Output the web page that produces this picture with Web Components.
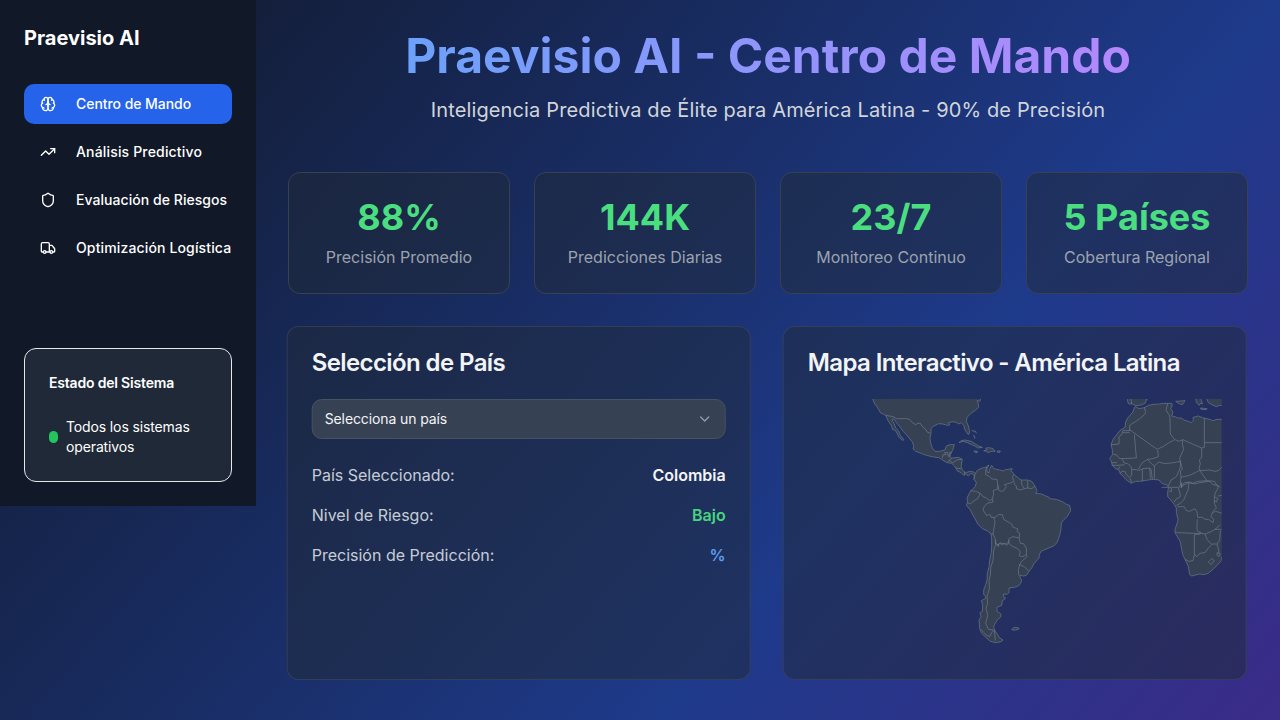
<!DOCTYPE html>
<html lang="es">
<head>
<meta charset="utf-8">
<title>Praevisio AI</title>
<style>
html,body{margin:0;height:100%;overflow:hidden}
body{font-family:Inter,sans-serif;font-size:16px;line-height:24px;color:#f3f4f6}
</style>
</head>
<body>
<praevisio-app></praevisio-app>
<script>
const define = (name, html) => customElements.define(name, class extends HTMLElement {
  constructor() {
    super();
    const t = document.createElement('template');
    t.innerHTML = typeof html === 'function' ? html(this) : html;
    this.attachShadow({mode: 'open'}).append(t.content.cloneNode(true));
  }
});

const icons = {
  brain: '<path d="M12 5a3 3 0 1 0-5.997.125 4 4 0 0 0-2.526 5.77 4 4 0 0 0 .556 6.588A4 4 0 1 0 12 18Z"/><path d="M12 5a3 3 0 1 1 5.997.125 4 4 0 0 1 2.526 5.77 4 4 0 0 1-.556 6.588A4 4 0 1 1 12 18Z"/><path d="M15 13a4.5 4.5 0 0 1-3-4 4.5 4.5 0 0 1-3 4"/><path d="M17.599 6.5a3 3 0 0 0 .399-1.375M6.003 5.125A3 3 0 0 0 6.401 6.5M3.477 10.896a4 4 0 0 1 .585-.396M19.938 10.5a4 4 0 0 1 .585.396M6 18a4 4 0 0 1-1.967-.516M19.967 17.484A4 4 0 0 1 18 18"/>',
  trend: '<path d="M22 7 13.5 15.5 8.5 10.5 2 17"/><path d="M16 7h6v6"/>',
  shield: '<path d="M20 13c0 5-3.5 7.5-7.66 8.95a1 1 0 0 1-.67-.01C7.5 20.5 4 18 4 13V6a1 1 0 0 1 1-1c2 0 4.5-1.2 6.24-2.72a1.17 1.17 0 0 1 1.52 0C14.51 3.81 17 5 19 5a1 1 0 0 1 1 1z"/>',
  truck: '<path d="M14 18V6a2 2 0 0 0-2-2H4a2 2 0 0 0-2 2v11a1 1 0 0 0 1 1h2M15 18H9M19 18h2a1 1 0 0 0 1-1v-3.65a1 1 0 0 0-.22-.624l-3.48-4.35A1 1 0 0 0 17.52 8H14"/><circle cx="17" cy="18" r="2"/><circle cx="7" cy="18" r="2"/>',
  chevron: '<path d="m6 9 6 6 6-6"/>'
};

define('line-icon', el => `<style>:host{display:block;width:16px;height:16px;flex:none}svg{display:block}</style>
<svg width="16" height="16" viewBox="0 0 24 24" fill="none" stroke="currentColor" stroke-width="2" stroke-linecap="round" stroke-linejoin="round">${icons[el.getAttribute('name')]}</svg>`);

define('nav-item', el => `<style>
:host{display:flex;align-items:center;gap:20px;height:40px;padding:0 16px;border-radius:10px;box-sizing:border-box;font-size:14px;font-weight:500;line-height:20px;color:#fff;white-space:nowrap}
:host([active]){background:#2563eb}
</style><line-icon name="${el.getAttribute('icon')}"></line-icon><span><slot></slot></span>`);

define('system-status', `<style>
:host{display:block;box-sizing:border-box;border:1px solid #e5e7eb;border-radius:12px;background:#1f2937;padding:24px;height:134px;color:#fff;font-size:14px;line-height:20px}
h3{margin:0;font-size:14px;font-weight:600;letter-spacing:-.19px;line-height:20px}
div{display:flex;align-items:center;gap:8px;margin-top:24px}
span{letter-spacing:-.13px}
i{width:9px;height:12px;border-radius:4.5px;background:#22c55e;flex:none}
</style><h3>Estado del Sistema</h3><div><i></i><span>Todos los sistemas operativos</span></div>`);

define('side-bar', `<style>
:host{display:block;box-sizing:border-box;width:256px;height:506px;padding:24px;background:#111827;color:#fff}
h1{margin:0 0 32px;font-size:20px;line-height:28px;font-weight:700}
nav{display:grid;grid-template-columns:minmax(0,1fr);gap:8px;margin-bottom:80px}
</style><h1>Praevisio AI</h1>
<nav><nav-item icon="brain" active style="letter-spacing:-.05px">Centro de Mando</nav-item><nav-item icon="trend" style="letter-spacing:.17px">Análisis Predictivo</nav-item><nav-item icon="shield" style="letter-spacing:.05px">Evaluación de Riesgos</nav-item><nav-item icon="truck" style="letter-spacing:.14px">Optimización Logística</nav-item></nav>
<system-status></system-status>`);

define('page-header', `<style>
:host{display:block;text-align:center;margin-bottom:48px}
h1{margin:0 0 16px;font-size:48px;line-height:48px;font-weight:700;color:transparent;background:linear-gradient(to right,#60a5fa,#c084fc);-webkit-background-clip:text;background-clip:text}
p{margin:0;font-size:20px;line-height:28px;color:#d1d5db;letter-spacing:.14px}
</style><h1>Praevisio AI - Centro de Mando</h1><p>Inteligencia Predictiva de Élite para América Latina - 90% de Precisión</p>`);

define('stat-card', el => `<style>
:host{display:block;box-sizing:border-box;padding:24px;border:1px solid #374151;border-radius:12px;background:rgba(31,41,55,.5);background-clip:padding-box;text-align:center}
b{display:block;font-size:36px;line-height:40px;font-weight:700;color:#4ade80;margin-bottom:8px}
span{display:block;color:#9ca3af}
</style><b>${el.getAttribute('value')}</b><span><slot></slot></span>`);

define('panel-card', el => `<style>
:host{display:block;box-sizing:border-box;height:354px;padding:24px;border:1px solid rgba(55,65,81,.85);border-radius:12px;background:rgba(31,41,55,.5);background-clip:padding-box;transform:translateX(-1.3px)}
h2{margin:0 0 24px;font-size:24px;line-height:24px;font-weight:600;letter-spacing:-.6px;color:#f3f4f6}
</style><h2>${el.getAttribute('heading')}</h2><slot></slot>`);

define('country-select', `<style>
:host{display:flex;align-items:center;justify-content:space-between;box-sizing:border-box;height:40px;padding:0 12px;border:1px solid #475264;border-radius:10px;background:#364153;font-size:14px;line-height:20px;color:#f3f4f6;margin-bottom:24px}
span{letter-spacing:-.11px}
line-icon{opacity:.5}
</style><span>Selecciona un país</span><line-icon name="chevron"></line-icon>`);

define('data-row', el => `<style>
:host{display:flex;justify-content:space-between;margin-bottom:16px;color:#c6ccd6}
b{font-weight:600;color:${el.getAttribute('color')}}
</style><span>${el.getAttribute('label')}</span><b><slot></slot></b>`);

define('latam-map', `<style>
:host{display:block;height:256px}
svg{display:block;width:414px;height:256px}
.l{fill:#364153;stroke:#737e90}
.b{fill:none;stroke:#737e90}
path{stroke-width:1.9;stroke-linejoin:round}
</style>
<svg viewBox="808 399 414 256">
<g transform="translate(860 390) scale(.33333)">
<path class="l" d="M36 20L45 42 55 55 62 68 78 76 85 92 96 108 98 118 108 122 118 142 130 152 132 148 122 136 116 122 108 114 104 102 97 90 99 86 106 90 110 98 122 112 130 124 140 134 150 146 158 156 162 168 160 177 168 184 184 190 200 196 222 201 238 203 248 210 262 218 276 220 284 228 290 236 292 242 304 248 312 256 318 252 326 258 334 250 344 256 343 268 350 252 342 246 330 244 318 248 308 240 304 228 308 208 296 202 276 204 270 200 276 186 280 178 284 164 270 164 260 168 256 180 240 184 226 184 218 174 212 156 211 142 214 130 214 116 222 108 232 104 236 101 248 102 264 106 270 105 266 98 280 95 290 97 296 102 304 98 312 106 316 120 326 134 330 126 326 108 320 94 322 82 334 70 348 60 357 52 356 42 352 32 360 34 366 20Z"/>
<path class="l" d="M298 158L304 152 316 150 334 154 344 160 356 168 368 172 354 174 346 168 336 164 324 158 310 154ZM372 182L382 180 378 174 388 173 400 176 406 184 394 184 386 188 380 184ZM342 183L354 184 352 188 346 187ZM412 183L422 183 420 187 414 187ZM336 122L348 124 350 130M340 136L345 139 345 146"/>
<path class="b" d="M78 76L100 80 110 86 138 86 150 88 158 98 168 104 174 100 182 100 190 112 198 118 202 126 212 130M248 204L250 194 260 194 254 188 264 187 266 200M276 186L270 188 268 202M276 204L264 216M268 210L280 220M280 218L292 210 306 208M288 234L304 236M314 245L315 256"/>
</g>
<g transform="translate(950 450) scale(.33333)">
<path class="l" d="M73 88L76 72 84 60 98 54 108 52 118 45 112 56 112 66 118 69 119 58 126 46 132 56 150 60 160 63 168 59 188 56 183 63 188 66 196 76 206 84 214 90 234 90 246 94 256 108 262 122 258 130 276 132 288 138 296 140 300 146 320 148 340 156 350 163 360 166 363 182 352 200 340 212 335 220 334 236 330 256 322 278 312 288 292 296 274 304 269 314 268 324 252 342 246 354 238 364 230 376 222 378 210 376 212 384 216 390 213 400 206 408 194 412 178 414 178 428 172 433 162 432 161 440 168 444 162 450 158 452 156 466 142 472 142 484 154 492 152 502 144 508 138 518 134 524 132 532 136 542 142 552 150 564 160 570 154 575 138 578 122 574 106 560 96 550 90 536 88 510 94 500 91 488 98 484 99 466 95 452 107 446 108 438 102 434 102 420 108 404 112 390 113 370 118 350 120 330 124 310 126 290 126 270 124 252 112 242 98 236 84 222 78 210 72 200 62 180 50 166 54 156 52 144 62 124 70 116 76 110 80 98Z"/>
<path class="b" d="M112 50L108 60 108 74 120 80 126 87 142 88 144 104 146 116 130 122 132 132 128 146M62 122L78 124 92 130 100 140 110 144 120 152 128 146M92 130L84 146 68 156 62 162 54 158M128 146L130 156 112 160 105 168 100 176 104 188 108 190 110 196 122 194 124 202 136 202 146 194 158 194 162 208 176 216 186 222 190 232 204 236 202 244 210 250 208 264M132 202L136 216 132 240 130 252 124 252M130 252L138 270 138 280 146 290 146 282 154 279 166 282 176 278 178 266 190 260 208 264 212 280 222 281M144 104L146 120 154 124 162 122 170 110 164 104 186 98 192 92 188 82 192 74M192 94L195 104 200 108 200 116 212 120 224 116 216 104 216 90M224 116L234 114 234 92M234 114L246 116 256 108"/>
</g>
<g transform="translate(960 540) scale(.33333)">
<path class="b" d="M106 0L108 14 102 30 100 60 93 84 92 105 88 120 89 146 82 170 84 190 79 205 84 226 78 250 86 268 104 271M104 271L107 302M64 268L78 284 90 290 96 278 102 272M107 8L116 16 120 10 128 14 134 10 140 16 148 10 156 18 174 26 182 36 178 46 184 50 194 48 200 42 202 50 186 64 180 74 194 80 208 94M180 72L176 92 177 106M148 10L148 0M192 12L200 24 200 42"/>
<path class="l" d="M156 268L164 262 178 264 176 268 162 271Z"/>
</g>
<g transform="translate(1100 390) scale(.33333)">
<path class="l" d="M108 50L118 56 134 53 146 46 160 43 180 42 190 40 204 40 216 40 218 46 213 56 220 66 216 78 226 80 234 84 246 84 252 90 266 94 274 98 281 92 280 82 296 78 308 83 330 88 340 92 352 88 380 88 380 500 366 500 365 512 356 522 342 536 326 550 312 554 300 552 276 558 270 554 266 530 256 508 250 496 246 480 242 456 226 428 226 418 232 400 235 390 230 368 230 354 224 344 210 326 204 320 204 304 206 296 204 286 186 280 178 270 160 268 146 270 120 274 108 274 94 280 78 268 70 258 62 252 58 240 48 236 38 226 34 212 30 206 38 194 38 180 34 164 40 148 48 138 60 122 76 112 78 96 84 84 94 72 100 66 104 52Z"/>
<path class="b" d="M134 52L138 68 130 78 120 86 108 94 90 106 90 122 70 122 66 134 58 140 58 162 34 164M88 118L172 178 190 170 208 158 224 150M70 128L90 128M104 134L110 204 68 206 60 206 52 196 40 192M204 40L199 60 210 78 211 90 212 132 224 148 238 154 249 149M249 149L306 174M314 84L314 158 370 158M314 158L314 172 306 174 306 202 299 210 302 222 298 234 302 244M249 149L248 162 252 178 240 204 242 214M174 180L176 200 160 206 144 208 128 218 120 230 116 238M144 208L152 218 164 228 170 222 178 216 190 220 206 220 222 218 242 214M164 228L164 266M150 234L154 238 158 268M128 238L128 274M128 236L150 234 152 266M96 240L106 238 116 241 128 238M96 240L96 256 90 262 96 278M68 206L72 218 86 222 94 230 96 240M36 226L58 226 74 224M36 218L52 218M56 238L60 230M62 250L66 244 76 244 80 254 88 260M206 288L214 270 230 260 238 242 242 230 242 214 248 238 242 242 244 262 270 256 290 246 302 240M302 244L310 256 322 272M246 292L242 276 244 262M302 242L330 240 344 244 356 242 370 228M244 290L254 278 270 276 278 280 294 274 322 272 344 274 350 284 362 292"/>
</g>
<g transform="translate(1150 480) scale(.33333)">
<path class="b" d="M36 22L54 22 88 22 96 8 94 24 100 16 118 8 115 30 108 46 102 60 92 70 80 76M64 24L66 34 58 34M86 24L90 36 92 50 78 58 74 66M118 8L136 12 150 8 180 4 190 14 204 16 205 24 196 40 194 56 194 70 200 84 188 96M84 80L104 80 110 92 120 94 136 86 142 96 144 112 158 112 166 118 176 118 190 128 192 118 184 110 188 98 198 94 218 100M144 118L142 126 142 152 156 160M76 156L84 158 130 160 156 160 166 162 182 156 196 148 216 148M152 162L134 164 134 224 130 242 118 244 106 238M134 224L142 230 150 220 166 218 176 204 186 194 172 178 166 162M186 192L202 192 210 180 212 152M202 192L206 206 208 220M196 148L212 134M194 50L204 56 200 66 194 62M204 48L220 46M202 218L212 222 208 230 202 226ZM176 246L186 236 194 242 184 254Z"/>
</g>
<g transform="translate(1100 390) scale(.33333)">
<path class="l" d="M84 20L84 36 88 42 98 42 108 47 124 45 136 40 144 20ZM228 34L256 32 248 44 238 41ZM286 20L290 36 298 46 302 40 308 42 302 20ZM302 54L322 56 320 59 304 58ZM318 20L326 38 340 46 350 50 360 46 380 48 380 20Z"/>
<path class="b" d="M94 27L96 42M144 27L140 30"/>
</g>
</svg>`);

define('praevisio-app', `<style>
:host{display:flex;align-items:flex-start;height:720px;overflow:hidden;background:linear-gradient(to bottom right,#111827,#1e3a8a,#581c87) 0 0/1280px 1470px no-repeat}
side-bar{flex:none}
main{flex:1;min-width:0;padding:32px}
.stats{display:grid;grid-template-columns:repeat(4,1fr);gap:24px;margin-bottom:32px}
.panels{display:grid;grid-template-columns:1fr 1fr;gap:32px}
</style>
<side-bar></side-bar>
<main><page-header></page-header>
<div class="stats"><stat-card value="88%">Precisión Promedio</stat-card><stat-card value="144K">Predicciones Diarias</stat-card><stat-card value="23/7">Monitoreo Continuo</stat-card><stat-card value="5 Países">Cobertura Regional</stat-card></div>
<div class="panels">
<panel-card heading="Selección de País"><country-select></country-select><data-row label="País Seleccionado:" color="#f3f4f6">Colombia</data-row><data-row label="Nivel de Riesgo:" color="#47d57d">Bajo</data-row><data-row label="Precisión de Predicción:" color="#5e9df0">%</data-row></panel-card>
<panel-card heading="Mapa Interactivo - América Latina"><latam-map></latam-map></panel-card>
</div></main>`);
</script>
</body>
</html>
